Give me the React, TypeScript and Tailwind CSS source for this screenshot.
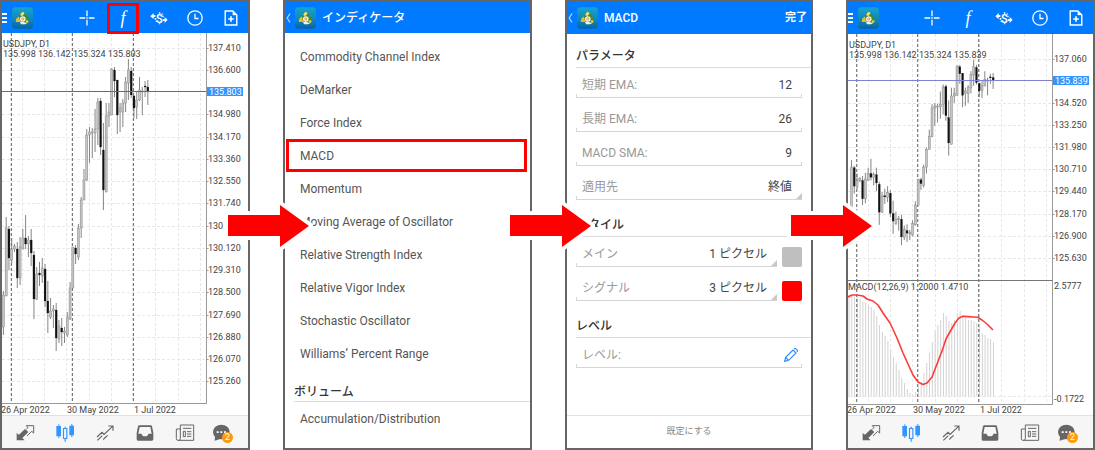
import type { ReactNode } from "react";

type Candle = [up: 0 | 1, high: number, top: number, bottom: number, low: number];

const CANDLES: Candle[] = [
  [1, 291, 295, 327, 335], [1, 217, 228, 296, 296], [0, 226, 229, 258, 270], [1, 238, 249, 260, 263],
  [1, 244, 246, 249, 252], [0, 242, 249, 278, 288], [1, 237, 247, 278, 285], [1, 229, 238, 249, 249],
  [0, 215, 238, 244, 249], [1, 236, 240, 244, 257], [0, 229, 240, 253, 266], [0, 251, 255, 299, 319],
  [1, 267, 274, 299, 300], [0, 262, 273, 275, 286], [1, 258, 268, 276, 283], [0, 264, 269, 301, 307],
  [0, 281, 301, 313, 333], [1, 298, 311, 317, 319], [1, 305, 309, 311, 328], [0, 303, 310, 338, 351],
  [1, 320, 326, 339, 343], [0, 318, 328, 332, 346], [1, 327, 331, 333, 343], [1, 312, 317, 335, 337],
  [1, 282, 288, 319, 320], [1, 247, 247, 288, 288], [0, 245, 248, 254, 264], [1, 224, 228, 257, 260],
  [1, 197, 200, 228, 238], [1, 169, 180, 200, 200], [1, 129, 135, 180, 181], [1, 127, 132, 135, 163],
  [1, 128, 132, 133, 158], [1, 109, 129, 133, 152], [1, 98, 102, 129, 145], [0, 98, 101, 147, 155],
  [0, 123, 150, 190, 210], [1, 103, 116, 192, 192], [1, 103, 112, 116, 127], [1, 68, 69, 115, 115],
  [0, 67, 70, 81, 97], [0, 80, 80, 115, 134], [1, 103, 108, 112, 132], [1, 99, 103, 112, 127],
  [1, 77, 82, 103, 112], [1, 59, 70, 83, 100], [0, 67, 71, 95, 98], [0, 95, 96, 108, 118],
  [1, 92, 100, 107, 119], [1, 77, 90, 100, 101], [1, 87, 91, 92, 115], [0, 81, 86, 87, 97],
  [0, 80, 87, 92, 105],
];

const BAR_TOPS = [
  295, 296, 297, 297, 299, 302, 303, 306, 307, 310, 316, 325, 332, 336, 341, 350, 357, 363, 370, 378, 383, 389,
  393, 395, 392, 387, 382, 373, 363, 353, 342, 331, 325, 320, 313, 316, 321, 323, 320, 313, 311, 315, 317, 320,
  320, 321, 323, 327, 333, 335, 338, 339, 342,
];

const SIGNAL: [number, number][] = [
  [0, 297], [4, 295], [9, 295], [15, 296], [19, 299], [25, 301], [30, 305], [35, 313], [42, 323], [49, 338],
  [55, 353], [60, 364], [65, 375], [70, 382], [75, 384.5], [79, 383], [84, 377], [89, 364], [94, 351], [98, 339],
  [103, 330], [107, 323], [111, 318], [115, 316.3], [120, 316.6], [125, 317], [130, 317.3], [134, 320],
  [139, 324], [145, 330],
];

const STEP = 25 / 9;

interface ChartProps {
  width: number;
  top: number;
  shift: number;
  scale: (y: number) => number;
  labels: [string, number][];
  price: string;
  priceY: number;
  lineClass: string;
  withMacd?: boolean;
}

function Chart({ width, top, shift, scale, labels, price, priceY, lineClass, withMacd }: ChartProps) {
  const bottom = withMacd ? 404 : 403;
  const axis = 204.5;
  return (
    <svg
      viewBox={`0 ${top} ${width} ${415 - top}`}
      className="block h-auto w-full bg-white font-[Roboto,sans-serif] text-[9px]"
      role="img"
      aria-label="USDJPY, D1"
    >
      <g className="stroke-[#e8e8e8]" strokeDasharray="3 2">
        {Array.from({ length: 9 }, (_, i) => Math.round(20 + i * 22.22) + 0.5).map((x) => (
          <line key={x} x1={x} x2={x} y1={top} y2={bottom} />
        ))}
        {labels.map(([t, y]) => (
          <line key={t} x1={0} x2={axis} y1={Math.round(y) + 0.5} y2={Math.round(y) + 0.5} />
        ))}
        {withMacd && <line x1={0} x2={axis} y1={396.5} y2={396.5} />}
      </g>
      {withMacd && (
        <g className="stroke-[#d2d2d2]">
          {BAR_TOPS.map((y, i) => (
            <line key={i} x1={1 + i * STEP} x2={1 + i * STEP} y1={y} y2={396.5} />
          ))}
        </g>
      )}
      <g className="stroke-[#777]" strokeDasharray="3 2" strokeWidth={1.2}>
        {[9.4, 70.4, 131.4].map((x) => (
          <line key={x} x1={x + shift} x2={x + shift} y1={top} y2={bottom} />
        ))}
      </g>
      {CANDLES.map(([up, h, t, b, l], i) => {
        const x = 1.4 + shift + i * STEP;
        const bodyTop = scale(t);
        const bodyHeight = Math.max(scale(b) - bodyTop, 1);
        return (
          <g key={i}>
            <line x1={x} x2={x} y1={scale(h)} y2={scale(l)} className="stroke-[#777]" strokeWidth={0.9} />
            <rect
              x={x - 1}
              y={bodyTop}
              width={2}
              height={bodyHeight}
              className={up ? "fill-[#c4c4c4] stroke-[#8a8a8a]" : "fill-[#111] stroke-[#222]"}
              strokeWidth={up ? 0.5 : 0.2}
            />
          </g>
        );
      })}
      <line x1={0} x2={axis} y1={priceY + 0.5} y2={priceY + 0.5} className={lineClass} strokeWidth={1} />
      <path d={`M${axis} ${top}V${bottom + 0.5}H0`} className="fill-none stroke-[#999]" />
      {withMacd && (
        <>
          <line x1={0} x2={axis} y1={280.5} y2={280.5} className="stroke-[#777]" />
          <polyline
            points={SIGNAL.map((p) => p.join(",")).join(" ")}
            className="fill-none stroke-[#ff3a3a]"
            strokeWidth={1.6}
            strokeLinejoin="round"
          />
        </>
      )}
      <g className="fill-[#444]">
        <text x={1} y={withMacd ? 48 : 47}>USDJPY, D1</text>
        <text x={1} y={withMacd ? 58 : 57}>{`135.998 136.142 135.324 ${price}`}</text>
        {labels.map(([t, y]) => (
          <g key={t}>
            <line x1={axis} x2={axis + 2} y1={Math.round(y) + 0.5} y2={Math.round(y) + 0.5} className="stroke-[#999]" />
            <text x={206} y={Math.round(y) + 3}>{t}</text>
          </g>
        ))}
        {withMacd && (
          <>
            <text x={0} y={290}>MACD(12,26,9) 1.2000 1.4710</text>
            <text x={206} y={289}>2.5777</text>
            <text x={206} y={402}>-0.1722</text>
          </>
        )}
        <text x={-1} y={413}>26 Apr 2022</text>
        <text x={65} y={413}>30 May 2022</text>
        <text x={132} y={413}>1 Jul 2022</text>
      </g>
      <rect x={205} y={priceY - 4} width={36} height={9} className="fill-[#3296ff]" />
      <text x={207} y={priceY + 4} className="fill-white">{price}</text>
    </svg>
  );
}

function AppIcon() {
  return (
    <svg viewBox="0 0 64 66" className="h-[22px] w-[21px] shrink-0" aria-hidden="true">
      <defs>
        <linearGradient id="tile" x1="0" y1="0" x2="0" y2="1">
          <stop offset="0" stopColor="#18a4cf" />
          <stop offset="0.6" stopColor="#0f86b8" />
          <stop offset="1" stopColor="#0a62a4" />
        </linearGradient>
      </defs>
      <rect width="64" height="66" rx="11" fill="url(#tile)" />
      <path d="M12 45C10 37 15 31 23 28L27 45Z" fill="#e8b92c" />
      <path d="M21 28C23 17 33 12 40 20C46 23 51 33 51 46L40 49L24 40Z" fill="#3c8a3a" />
      <path d="M25 24C28 13 36 12 38 20L31 28Z" fill="#f2dc70" />
      <circle cx="33" cy="36" r="8.500" fill="#fff6dc" />
      <circle cx="33" cy="36" r="4.500" fill="#e8862c" />
      <circle cx="33" cy="36" r="2" fill="#fff" />
      <path d="M24 46L32 44L46 49L40 52H28Z" fill="#e9f3f5" />
      <circle cx="46" cy="44" r="4" fill="#f4d03c" />
    </svg>
  );
}

function ToolButton({ label, marked, children }: { label: string; marked?: boolean; children: ReactNode }) {
  return (
    <button aria-label={label} className="relative flex h-full w-5 items-center justify-center text-white">
      {children}
      {marked && <span className="absolute -inset-x-[6px] top-[1px] -bottom-[1px] border-[3px] border-[#f00]" />}
    </button>
  );
}

function ChartToolbar({ tall, marked }: { tall?: boolean; marked?: boolean }) {
  return (
    <header className={`flex items-center bg-[#007aff] ${tall ? "h-8" : "h-[31px]"}`}>
      <button aria-label="メニュー" className="flex w-[5px] flex-col gap-[2px]">
        <span className="h-[2px] bg-white" />
        <span className="h-[2px] bg-white" />
        <span className="h-[2px] bg-white" />
      </button>
      <span className="ml-[5px]">
        <AppIcon />
      </span>
      <nav className="ml-auto flex h-full gap-4 pr-[7px]">
        <ToolButton label="十字線">
          <svg viewBox="0 0 16 16" className="size-4 fill-none stroke-current" strokeWidth="1.3">
            <path d="M8 .5v5.700M8 9.800v5.700M.5 8h5.700M9.800 8h5.700M7.300 8h1.400" />
          </svg>
        </ToolButton>
        <ToolButton label="インディケータ" marked={marked}>
          <span className="font-['Liberation_Serif',serif] text-[18px] leading-none italic">f</span>
        </ToolButton>
        <ToolButton label="取引">
          <svg viewBox="0 0 54 42" className="h-[14px] w-[18px] fill-current">
            <path d="M1 16L11 6V12H16V18H11V24Z" />
            <path d="M14 21h5v5h-5zM17 29h4v4h-4z" />
            <path d="M53 26L44 36V30H39V25H44V18Z" />
            <path d="M37 14h4v5h-4zM35 7h3v4h-3z" />
            <text x="28" y="35" textAnchor="middle" className="font-[Roboto,sans-serif] text-[38px] font-medium">
              $
            </text>
          </svg>
        </ToolButton>
        <ToolButton label="時間足">
          <svg viewBox="0 0 16 16" className="size-4 fill-none stroke-current" strokeWidth="1.3">
            <circle cx="8" cy="8" r="7.200" />
            <path d="M8 3.800V8.500H11.500" />
          </svg>
        </ToolButton>
        <ToolButton label="新規注文">
          <svg viewBox="0 0 14 16" className="h-4 w-3.5 fill-none stroke-current" strokeWidth="1.4">
            <path d="M1.200 1H8.800L12.800 5V15H1.200Z" />
            <path d="M8.800 1V5H12.800Z" className="fill-current" strokeWidth=".3" />
            <path d="M7 6.200v5.600M4.200 9h5.600" strokeWidth="1.600" />
          </svg>
        </ToolButton>
      </nav>
    </header>
  );
}

function TitleBar({ title, tall, action }: { title: string; tall?: boolean; action?: string }) {
  return (
    <header
      className={`flex items-center bg-[#007aff] pr-1 text-[12px] font-medium text-white ${tall ? "h-8" : "h-[31px]"}`}
    >
      <button aria-label="戻る" className="mx-px flex w-[5px] justify-center">
        <svg viewBox="0 0 5 10" className="h-2.5 w-[5px] fill-none stroke-[#b5d9ff]" strokeWidth="1.200">
          <path d="M4 .5L1.200 5L4 9.500" />
        </svg>
      </button>
      <span className="ml-[3px]">
        <AppIcon />
      </span>
      <h1 className="ml-[6px]">{title}</h1>
      {action && <button className="ml-auto text-[11px] font-bold">{action}</button>}
    </header>
  );
}

function TabButton({ label, children }: { label: string; children: ReactNode }) {
  return (
    <button aria-label={label} className="relative flex flex-1 items-center justify-center">
      {children}
    </button>
  );
}

function TabBar() {
  const icon = "h-[18px] w-5 overflow-visible";
  return (
    <nav className="flex h-[33px] border-t border-[#e2e2e2] bg-[#f6f6f6] px-[3px] pt-px text-[#666]">
      <TabButton label="気配値">
        <svg viewBox="0 0 60 54" className={icon}>
          <path d="M5 49V27L12 32L30 15L40 24L22 42L29 49Z" fill="currentColor" />
          <path d="M34 15L39 11L34 5H56V27L50 22L36 36" fill="none" stroke="currentColor" strokeWidth="3" />
        </svg>
      </TabButton>
      <TabButton label="チャート">
        <svg viewBox="0 0 60 54" className={`${icon} text-[#3296ff]`} fill="currentColor">
          <path d="M10 1h3v5h5v31h-5v5h-3v-5h-6V6h6zM49 0h3v5h5v29h-5v5h-3v-5h-6V5h6z" />
          <path d="M25.500 13.500h10v30h-10zM30.500 8v5M30.500 44v9" fill="none" stroke="currentColor" strokeWidth="3.500" />
        </svg>
      </TabButton>
      <TabButton label="トレード">
        <svg viewBox="0 0 60 54" className={icon} fill="none" stroke="currentColor" strokeWidth="3.500">
          <path d="M6 39L21 25L27 31L52 8M40 6H54V20M7 49L22 35M25 47L29 42L38 34" />
        </svg>
      </TabButton>
      <TabButton label="メールボックス">
        <svg viewBox="0 0 60 54" className={icon}>
          <path
            fillRule="evenodd"
            fill="currentColor"
            d="M13 4H47Q50 4 51 7L55 27V46Q55 50 51 50H9Q5 50 5 46V27L9 7Q10 4 13 4ZM14 9L10 29H20Q21 37 30 37Q39 37 40 29H50L46 9Z"
          />
        </svg>
      </TabButton>
      <TabButton label="ニュース">
        <svg viewBox="0 0 60 54" className={icon} fill="none" stroke="currentColor" strokeWidth="3">
          <path d="M16 3H56V49H9Q4 49 4 44V15H16M16 3V44Q16 49 11 49" />
          <path d="M24 13H49M36 23H49M36 30H49M36 37H49" />
          <path d="M25 22h6v16h-6z" />
        </svg>
      </TabButton>
      <TabButton label="チャット">
        <svg viewBox="0 0 60 54" className={icon}>
          <ellipse cx="19" cy="24" rx="25" ry="22" fill="currentColor" />
          <path d="M0 36L-1 50L16 45Z" fill="currentColor" />
          <path d="M5 22h6v5H5zM16 22h6v5h-6zM27 22h6v5h-6z" fill="#fff" />
        </svg>
        <span className="absolute top-[15px] left-[17px] flex size-[11px] items-center justify-center rounded-full bg-[#ff9a0a] font-[Roboto,sans-serif] text-[9px] leading-none text-white">
          2
        </span>
      </TabButton>
    </nav>
  );
}

function Arrow() {
  return (
    <svg
      viewBox="0 0 89 58"
      className="pointer-events-none absolute top-[197px] left-full z-10 -ml-[26px] h-[58px] w-[89px]"
      aria-hidden="true"
    >
      <path d="M4 18H56V8L85 29L56 50V39H4Z" fill="none" stroke="#fff" strokeWidth="8" />
      <path d="M4 18H56V8L85 29L56 50V39H4Z" fill="#f00" />
    </svg>
  );
}

function Step({ arrow, children }: { arrow?: boolean; children: ReactNode }) {
  return (
    <div className="relative">
      <section className="flex h-full flex-col overflow-hidden border-2 border-[#666] bg-white">{children}</section>
      {arrow && <Arrow />}
    </div>
  );
}

const INDICATORS = [
  "Commodity Channel Index",
  "DeMarker",
  "Force Index",
  "MACD",
  "Momentum",
  "Moving Average of Oscillator",
  "Relative Strength Index",
  "Relative Vigor Index",
  "Stochastic Oscillator",
  "Williams’ Percent Range",
];

function IndicatorItem({ name }: { name: string }) {
  return (
    <li>
      <button
        className={`flex h-[33px] w-full items-center border-[3px] pl-[11px] text-left ${
          name === "MACD" ? "border-[#f00]" : "border-transparent"
        }`}
      >
        {name}
      </button>
    </li>
  );
}

const FIELD =
  "relative flex h-[30px] w-full min-w-0 items-center border-b border-[#d6d6d6] pt-1 pl-[6px] text-[#999] before:absolute before:bottom-0 before:left-0 before:h-[3px] before:w-px before:bg-[#d6d6d6] after:absolute after:right-0 after:bottom-0";
const TICK = "after:h-[3px] after:w-px after:bg-[#d6d6d6]";
const CORNER = "after:size-[6px] after:bg-[#c8c8c8] after:[clip-path:polygon(100%_0,100%_100%,0_100%)]";

function NumberField({ id, label, value }: { id: string; label: string; value: string }) {
  return (
    <div className={`${FIELD} ${TICK} pr-[10px]`}>
      <label htmlFor={id} className="shrink-0">{label}</label>
      <input id={id} defaultValue={value} className="w-full min-w-0 text-right text-[#444] outline-none" />
    </div>
  );
}

function SelectField({ id, label, value }: { id: string; label: string; value: string }) {
  return (
    <div className={`${FIELD} ${CORNER} pr-[10px]`}>
      <label htmlFor={id} className="shrink-0">{label}</label>
      <select id={id} className="w-full min-w-0 appearance-none text-right text-[#444] outline-none [text-align-last:right]">
        <option>{value}</option>
      </select>
    </div>
  );
}

function Group({ title, children }: { title: string; children: ReactNode }) {
  return (
    <section>
      <h2 className="flex h-[34px] items-end border-b border-[#dcdcdc] pb-[2px] text-[12px] font-medium text-[#333]">
        {title}
      </h2>
      <div className="flex flex-col gap-1 pr-[9px]">{children}</div>
    </section>
  );
}

const LEFT_LABELS: [string, number][] = [
  "137.410", "136.600", "", "134.980", "134.170", "133.360", "132.550", "131.740",
  "130.930", "130.120", "129.310", "128.500", "127.690", "126.880", "126.070", "125.260",
]
  .map((t, i): [string, number] => [t, 47.5 + i * 22.25])
  .filter(([t]) => t !== "");

const RIGHT_LABELS: [string, number][] = [
  "137.060", "", "134.520", "133.250", "131.980", "130.710", "129.440", "128.170", "126.900", "125.630",
]
  .map((t, i): [string, number] => [t, 58.5 + i * 22.15])
  .filter(([t]) => t !== "");

export default function App() {
  return (
    <main className="grid grid-cols-[250fr_249fr_248fr_249fr] gap-x-[33px] overflow-hidden bg-white font-[Roboto,'Noto_Sans_CJK_JP',sans-serif]">
      <Step arrow>
        <ChartToolbar marked />
        <Chart
          width={246}
          top={33}
          shift={0}
          scale={(y) => y}
          labels={LEFT_LABELS}
          price="135.803"
          priceY={91}
          lineClass="stroke-[#c23b78]"
        />
        <TabBar />
      </Step>

      <Step arrow>
        <TitleBar title="インディケータ" />
        <ul className="mr-[3px] ml-px pt-[7px] text-[12px] text-[#555]">
          {INDICATORS.map((name) => (
            <IndicatorItem key={name} name={name} />
          ))}
        </ul>
        <h2 className="ml-[9px] flex h-8 items-end border-b border-[#dcdcdc] text-[12px] font-medium text-[#333]">
          ボリューム
        </h2>
        <ul className="mr-[3px] ml-px text-[12px] text-[#555]">
          <IndicatorItem name="Accumulation/Distribution" />
        </ul>
      </Step>

      <Step arrow>
        <TitleBar title="MACD" tall action="完了" />
        <div className="flex flex-1 flex-col gap-[3px] pl-[9px] text-[12px]">
          <Group title="パラメータ">
            <NumberField id="fast" label="短期 EMA:" value="12" />
            <NumberField id="slow" label="長期 EMA:" value="26" />
            <NumberField id="sma" label="MACD SMA:" value="9" />
            <SelectField id="apply" label="適用先" value="終値" />
          </Group>
          <Group title="スタイル">
            <div className="flex items-end gap-[5px]">
              <SelectField id="main" label="メイン" value="1 ピクセル" />
              <button aria-label="メインの色" className="size-5 shrink-0 rounded-[2px] bg-[#bfbfbf]" />
            </div>
            <div className="flex items-end gap-[5px]">
              <SelectField id="signal" label="シグナル" value="3 ピクセル" />
              <button aria-label="シグナルの色" className="size-5 shrink-0 rounded-[2px] bg-[#f00]" />
            </div>
          </Group>
          <Group title="レベル">
            <div className={`${FIELD} ${TICK} justify-between pr-1`}>
              <span>レベル:</span>
              <button aria-label="レベルを編集">
                <svg viewBox="0 0 42 42" className="size-[14px] fill-none stroke-[#2a8cff]" strokeWidth="3.500">
                  <path d="M2 40L5 28L27 6L36 15L14 37ZM5 28L14 37M30 3L34 1L41 8L39 12" />
                </svg>
              </button>
            </div>
          </Group>
        </div>
        <button className="h-[33px] border-t border-[#e2e2e2] text-[9px] text-[#888]">既定にする</button>
      </Step>

      <Step>
        <ChartToolbar tall />
        <Chart
          width={245}
          top={34}
          shift={-0.7}
          scale={(y) => 22.3 + 0.635 * y}
          labels={RIGHT_LABELS}
          price="135.839"
          priceY={80}
          lineClass="stroke-[#8080d8]"
          withMacd
        />
        <TabBar />
      </Step>
    </main>
  );
}
